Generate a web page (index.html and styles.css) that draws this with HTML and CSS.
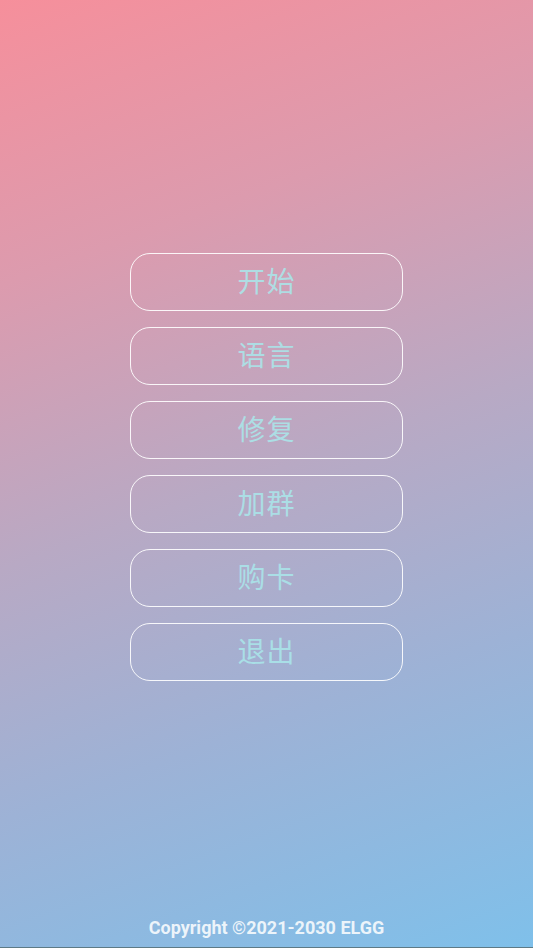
FILE: index.html
```html
<!DOCTYPE html>
<html lang="zh">
<head>
  <meta charset="UTF-8">
  <meta name="viewport" content="width=device-width, initial-scale=1.0">
  <title>菜单</title>
  <link rel="stylesheet" href="styles.css">
</head>
<body>
  <div class="page">
    <div class="menu">
      <button class="menu-btn">开始</button>
      <button class="menu-btn">语言</button>
      <button class="menu-btn">修复</button>
      <button class="menu-btn">加群</button>
      <button class="menu-btn">购卡</button>
      <button class="menu-btn">退出</button>
    </div>
    <div class="footer">Copyright ©2021-2030 ELGG</div>
  </div>
</body>
</html>
```

FILE: styles.css
```css
* {
  margin: 0;
  padding: 0;
  box-sizing: border-box;
}
html, body {
  height: 100%;
}
body {
  font-family: Roboto, "Noto Sans CJK SC", sans-serif;
  background: #5d7a86;
}
.page {
  height: calc(100vh - 1px);
  display: flex;
  flex-direction: column;
  align-items: center;
  background: linear-gradient(160deg, #f68f9b 0%, #dc9bae 25%, #b8a9c4 50%, #9db2d6 72%, #7fc0ea 100%);
}
.menu {
  flex: 1;
  display: flex;
  flex-direction: column;
  gap: 16px;
  padding-top: 253px;
}
.menu-btn {
  width: 273px;
  height: 58px;
  padding-bottom: 4px;
  background: transparent;
  border: 1.2px solid rgba(255, 255, 255, 0.9);
  border-radius: 20px;
  color: rgba(170, 230, 234, 0.88);
  font-family: "Noto Sans CJK SC", sans-serif;
  font-size: 28px;
  letter-spacing: 1px;
  cursor: pointer;
}
.footer {
  color: rgba(255, 255, 255, 0.85);
  font-weight: bold;
  font-size: 18px;
  padding-bottom: 9px;
}
```
